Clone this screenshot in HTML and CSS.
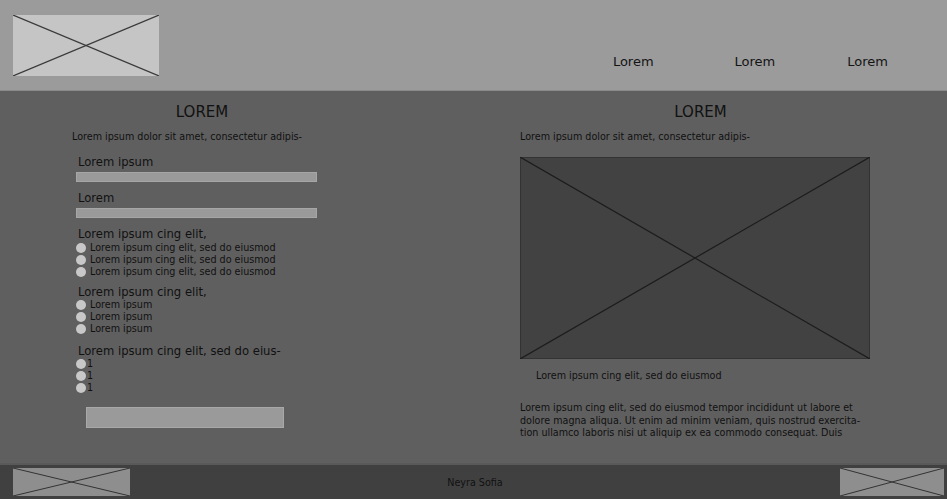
FILE: index.html
```html
<!DOCTYPE html>
<html lang="en">
<head>
  <meta charset="UTF-8">
  <meta name="viewport" content="width=device-width, initial-scale=1.0">
  <title>Wireframe</title>
  <link rel="stylesheet" href="styles.css">
</head>
<body>
  <header>
    <svg class="logo" viewBox="0 0 146 61" preserveAspectRatio="none">
      <rect x="0" y="0" width="146" height="61" fill="#c5c5c5"/>
      <line x1="0" y1="0" x2="146" y2="61" stroke="#3a3a3a" stroke-width="1.2"/>
      <line x1="0" y1="61" x2="146" y2="0" stroke="#3a3a3a" stroke-width="1.2"/>
    </svg>
    <nav>
      <a href="#">Lorem</a>
      <a href="#">Lorem</a>
      <a href="#">Lorem</a>
    </nav>
  </header>

  <main>
    <section class="col col-left">
      <h2>LOREM</h2>
      <p class="intro">Lorem ipsum dolor sit amet, consectetur adipis-</p>

      <div class="field first">
        <label>Lorem ipsum</label>
        <div class="bar"></div>
      </div>
      <div class="field">
        <label>Lorem</label>
        <div class="bar"></div>
      </div>

      <div class="group lead">
        <label>Lorem ipsum cing elit,</label>
        <div class="radio"><span class="dot"></span>Lorem ipsum cing elit, sed do eiusmod</div>
        <div class="radio"><span class="dot"></span>Lorem ipsum cing elit, sed do eiusmod</div>
        <div class="radio"><span class="dot"></span>Lorem ipsum cing elit, sed do eiusmod</div>
      </div>
      <div class="group">
        <label>Lorem ipsum cing elit,</label>
        <div class="radio"><span class="dot"></span>Lorem ipsum</div>
        <div class="radio"><span class="dot"></span>Lorem ipsum</div>
        <div class="radio"><span class="dot"></span>Lorem ipsum</div>
      </div>
      <div class="group spaced">
        <label>Lorem ipsum cing elit, sed do eius-</label>
        <div class="radio tight"><span class="dot"></span>1</div>
        <div class="radio tight"><span class="dot"></span>1</div>
        <div class="radio tight"><span class="dot"></span>1</div>
      </div>

      <button class="submit"></button>
    </section>

    <section class="col col-right">
      <h2>LOREM</h2>
      <p class="intro">Lorem ipsum dolor sit amet, consectetur adipis-</p>
      <svg class="picture" viewBox="0 0 350 202" preserveAspectRatio="none">
        <rect x="0.5" y="0.5" width="349" height="201" fill="#424242" stroke="#333"/>
        <line x1="0" y1="0" x2="350" y2="202" stroke="#1c1c1c" stroke-width="1.2"/>
        <line x1="0" y1="202" x2="350" y2="0" stroke="#1c1c1c" stroke-width="1.2"/>
      </svg>
      <p class="caption">Lorem ipsum cing elit, sed do eiusmod</p>
      <p class="text">Lorem ipsum cing elit, sed do eiusmod tempor incididunt ut labore et<br>dolore magna aliqua. Ut enim ad minim veniam, quis nostrud exercita-<br>tion ullamco laboris nisi ut aliquip ex ea commodo consequat. Duis</p>
    </section>
  </main>

  <footer>
    <svg class="thumb thumb-left" viewBox="0 0 117 28" preserveAspectRatio="none">
      <rect x="0" y="0" width="117" height="28" fill="#8e8e8e"/>
      <line x1="0" y1="0" x2="117" y2="28" stroke="#333" stroke-width="1"/>
      <line x1="0" y1="28" x2="117" y2="0" stroke="#333" stroke-width="1"/>
    </svg>
    <span class="credit">Neyra Sofia</span>
    <svg class="thumb thumb-right" viewBox="0 0 104 28" preserveAspectRatio="none">
      <rect x="0" y="0" width="104" height="28" fill="#8e8e8e"/>
      <line x1="0" y1="0" x2="104" y2="28" stroke="#333" stroke-width="1"/>
      <line x1="0" y1="28" x2="104" y2="0" stroke="#333" stroke-width="1"/>
    </svg>
  </footer>
</body>
</html>
```

FILE: styles.css
```css
body {
  margin: 0;
  height: 100vh;
  display: flex;
  flex-direction: column;
  font-family: 'DejaVu Sans', sans-serif;
  color: #111;
  background-color: #5f5f5f;
  overflow: hidden;
}
header {
  height: 90px;
  flex-shrink: 0;
  background-color: #9b9b9b;
  border-bottom: 1px solid #8a8a8a;
  display: flex;
  align-items: flex-start;
}
.logo {
  width: 146px;
  height: 61px;
  margin: 15px 0 0 13px;
  display: block;
}
nav {
  margin-left: auto;
  margin-top: 53px;
  display: flex;
}
nav a {
  color: #141414;
  text-decoration: none;
  font-size: 13px;
  line-height: 18px;
  margin-right: 81px;
}
nav a:nth-child(2) {
  margin-right: 72px;
}
nav a:last-child {
  margin-right: 59px;
}
main {
  flex: 1;
  display: grid;
  grid-template-columns: 260px 360px;
  column-gap: 188px;
  padding: 12px 0 0 72px;
}
h2 {
  margin: 0;
  font-size: 15px;
  font-weight: normal;
  line-height: 18px;
  text-align: center;
}
.col-right h2 {
  padding-left: 1px;
}
.intro {
  margin: 10px 0 0;
  font-size: 9.6px;
  line-height: 12px;
  white-space: nowrap;
}
label {
  display: block;
  font-size: 11.6px;
  line-height: 14px;
  padding-left: 6px;
}
.field {
  margin-top: 9px;
}
.field.first {
  margin-top: 12px;
}
.bar {
  width: 239px;
  height: 8px;
  margin: 3px 0 0 4px;
  background-color: #9a9a9a;
  border: 1px solid #a6a6a6;
}
.group {
  margin-top: 7px;
}
.group.lead {
  margin-top: 9px;
}
.group.lead label {
  margin-bottom: 1px;
}
.group.spaced {
  margin-top: 9px;
}
.radio {
  display: flex;
  align-items: center;
  font-size: 9.6px;
  line-height: 12px;
  padding-left: 4px;
  white-space: nowrap;
}
.dot {
  width: 10px;
  height: 10px;
  border-radius: 50%;
  background-color: #c8c8c8;
  margin-right: 4px;
  flex-shrink: 0;
}
.radio.tight .dot {
  margin-right: 1px;
}
.submit {
  display: block;
  width: 198px;
  height: 21px;
  margin: 13px 0 0 14px;
  padding: 0;
  background-color: #9a9a9a;
  border: 1px solid #a8a8a8;
}
.picture {
  display: block;
  width: 350px;
  height: 202px;
  margin-top: 14px;
}
.caption {
  margin: 11px 0 0;
  padding-left: 16px;
  font-size: 9.6px;
  line-height: 12px;
}
.text {
  margin: 20px 0 0;
  font-size: 9.6px;
  line-height: 12.5px;
  white-space: nowrap;
}
footer {
  height: 34px;
  flex-shrink: 0;
  background-color: #404040;
  border-top: 2px solid #595959;
  display: flex;
  align-items: center;
  justify-content: space-between;
  padding: 0 3px 0 13px;
}
.thumb {
  display: block;
  height: 28px;
}
.thumb-left {
  width: 117px;
}
.thumb-right {
  width: 104px;
}
.credit {
  font-size: 9.6px;
  color: #111;
  padding-right: 20px;
}
```
